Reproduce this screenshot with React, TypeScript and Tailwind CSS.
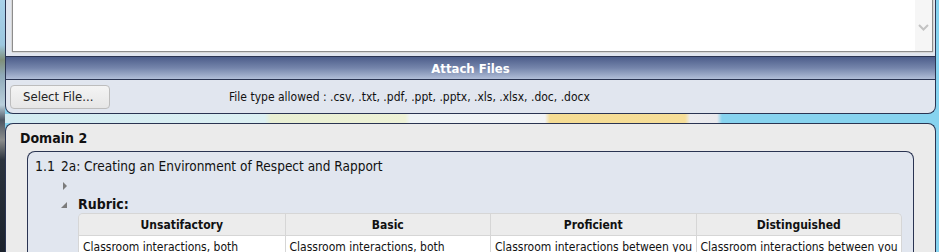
const FONT = "font-['DejaVu_Sans_Condensed','DejaVu_Sans',sans-serif]";

const columns = [
  { title: "Unsatifactory", text: "Classroom interactions, both" },
  { title: "Basic", text: "Classroom interactions, both" },
  { title: "Proficient", text: "Classroom interactions between you" },
  { title: "Distinguished", text: "Classroom interactions between you" },
];

function TriangleRight() {
  return (
    <svg width="5" height="8" viewBox="0 0 5 8" className="block">
      <path d="M0 0 L4 4 L0 8 Z" fill="#7b7b7b" />
    </svg>
  );
}

function TriangleSE() {
  return (
    <svg width="6" height="6" viewBox="0 0 6 6" className="block">
      <path d="M6 0 L6 6 L0 6 Z" fill="#7b7b7b" />
    </svg>
  );
}

export default function App() {
  return (
    <div className={`flex h-[252px] w-[939px] overflow-hidden bg-[#86d3ef] text-[#111] ${FONT}`}>
      {/* desktop showing on the left */}
      <div className="w-[5px] shrink-0 bg-[linear-gradient(180deg,#a9d2ea_0px,#9cc7df_45px,#7f8f78_60px,#8fa9b8_75px,#b9cfdc_105px,#4b5663_120px,#8b8d8c_140px,#2b333d_160px,#1b222c_252px)]" />

      <div className="flex w-[931px] shrink-0 flex-col">
        {/* attach panel */}
        <div className="flex shrink-0 flex-col overflow-hidden rounded-b-[8px] border-x border-b border-[#2a3452] bg-[#e1e6ef]">
          <div className="ml-[6px] mr-[2px] flex h-[52px] shrink-0 border-x border-b border-[#8d8d8d] bg-white shadow-[0_1px_0_#d6d6d6,-1px_0_0_#d6d6d6,1px_0_0_#d6d6d6]">
            <div className="flex-1" />
            <div className="flex w-[17px] flex-col items-center bg-[#f6f6f6] pt-[24px]">
              <svg width="11" height="7" viewBox="0 0 11 7">
                <path d="M1 1 L5.5 5.5 L10 1" fill="none" stroke="#c3c3c3" strokeWidth="2" />
              </svg>
            </div>
          </div>
          <div className="h-[4px] shrink-0" />
          <div className="flex h-[24px] shrink-0 items-center justify-center border-y border-[#2a3452] bg-[linear-gradient(180deg,#4c5d8a_0%,#7585ab_50%,#b1bed8_100%)] pt-[1px] text-[13px] font-bold text-white">
            Attach Files
          </div>
          <div className="flex h-[33px] shrink-0 items-center">
            <button className="ml-[4px] h-[24px] w-[100px] rounded-[4px] border border-[#bdbdbd] bg-[linear-gradient(180deg,#f4f4f4,#e6e6e6)] pl-[12px] text-left text-[13px] text-[#222]">
              Select File...
            </button>
            <span className="ml-[119px] text-[12px] text-[#111]">
              File type allowed : .csv, .txt, .pdf, .ppt, .pptx, .xls, .xlsx, .doc, .docx
            </span>
          </div>
        </div>

        {/* desktop showing in the gap */}
        <div className="h-[9px] shrink-0 bg-[linear-gradient(90deg,#d2ebf2_0px,#dcf0f3_260px,#e9efd3_266px,#eef2d6_400px,#eef3f6_405px,#f2f4f6_540px,#f5dc93_545px,#f6de98_680px,#ebebee_685px,#e9e9ed_712px,#87d3ef_717px)]" />

        {/* domain panel */}
        <div className="flex shrink-0 flex-col rounded-t-[8px] border-x border-t border-[#2a3452] bg-[#ebebeb]">
          <div className="pl-[14px] pt-[6px] text-[14px] font-bold leading-[17px]">Domain 2</div>
          <div className="mx-[21px] mt-[4px] flex flex-col rounded-t-[8px] border-x border-t border-[#2a3452] bg-[#e1e6ef]">
            <div className="flex h-[22px] items-end pl-[7px] text-[13.5px] leading-[16px]">
              <span className="w-[26px] text-[14px]">1.1</span>
              <span>2a: Creating an Environment of Respect and Rapport</span>
            </div>
            <div className="flex h-[21px] items-center pl-[35px] pt-[3px]">
              <TriangleRight />
            </div>
            <div className="flex h-[19px] items-center pl-[33px]">
              <TriangleSE />
              <span className="ml-[11px] text-[14px] font-bold">Rubric:</span>
            </div>
            <div className="ml-[50px] mt-[-1px] w-[824px] overflow-hidden rounded-t-[5px] border-x border-t border-[#d6d6d6]">
              <div className="grid grid-cols-4 bg-[#ececec]">
                {columns.map((c, i) => (
                  <div
                    key={c.title}
                    className={`flex h-[22px] items-center justify-center border-b border-[#d6d6d6] text-[12px] font-bold ${i > 0 ? "border-l" : ""}`}
                  >
                    {c.title}
                  </div>
                ))}
              </div>
              <div className="grid grid-cols-4 bg-white">
                {columns.map((c, i) => (
                  <div
                    key={c.title}
                    className={`h-[30px] border-[#d6d6d6] pl-[4px] pt-[2px] text-[12px] ${i > 0 ? "border-l" : ""}`}
                  >
                    {c.text}
                  </div>
                ))}
              </div>
            </div>
          </div>
        </div>
      </div>

      <div className="w-[3px] shrink-0 bg-[#86d3ef]" />
    </div>
  );
}
